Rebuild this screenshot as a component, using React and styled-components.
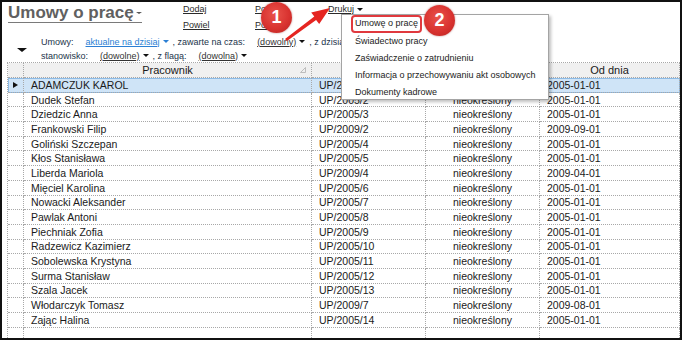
import styled, { createGlobalStyle } from "styled-components";

const GlobalStyle = createGlobalStyle`
  html, body {
    margin: 0;
    padding: 0;
    background: #ffffff;
  }
  body {
    font-family: "Liberation Sans", Arial, sans-serif;
    color: #1a1a1a;
  }
`;

/* ========== Layout ========== */
const Frame = styled.div`
  position: relative;
  width: 682px;
  height: 340px;
  box-sizing: border-box;
  border: 2px solid #111;
  overflow: hidden;
  background: #fff;
`;

const TopBar = styled.div`
  display: flex;
  height: 33px;
  padding-left: 6px;
`;

const TitleBox = styled.div`
  width: 175px;
`;

const Title = styled.h1`
  display: inline-flex;
  align-items: center;
  gap: 2px;
  margin: 1px 0 0;
  font-size: 17px;
  line-height: 19px;
  font-weight: bold;
  color: #606060;
  border-bottom: 1px solid #7a7a7a;
`;

const ActionCol = styled.div`
  display: flex;
  flex-direction: column;
  gap: 2px;
  width: ${({ $w }) => $w}px;
`;

const ActionLink = styled.span`
  display: inline-flex;
  align-items: center;
  gap: 3px;
  font-size: 9px;
  line-height: 14px;
  color: #2a2a2a;
  text-decoration: underline;
`;

const Caret = styled.span`
  display: inline-block;
  width: 0;
  height: 0;
  border-left: ${({ $s }) => $s}px solid transparent;
  border-right: ${({ $s }) => $s}px solid transparent;
  border-top: ${({ $s }) => Math.round($s * 0.8)}px solid ${({ $c }) => $c || "#111"};
`;

const FilterArea = styled.div`
  display: flex;
  align-items: center;
  height: 27px;
  padding-left: 15px;
`;

const BigCaretBox = styled.div`
  width: 24px;
  display: flex;
  padding-top: 3px;
`;

const FilterLines = styled.div`
  display: flex;
  flex-direction: column;
  font-size: 9px;
  line-height: 14px;
`;

const FilterLine = styled.div`
  display: flex;
  align-items: center;
  white-space: nowrap;
`;

const Label = styled.span`
  color: #22344a;
  margin-right: 12px;
`;

const Sep = styled.span`
  color: #22344a;
  margin: 0 12px 0 4px;
`;

const Pick = styled.span`
  display: inline-flex;
  align-items: center;
  gap: 3px;
  color: ${({ $blue }) => ($blue ? "#2b7fd4" : "#333")};
  text-decoration: underline;
`;

/* ========== Grid ========== */
const Grid = styled.div`
  margin-left: 5px;
  border-top: 1px dotted #a8a8a8;
  border-left: 1px dotted #a8a8a8;
`;

const Row = styled.div`
  display: grid;
  grid-template-columns: 16px 288px 114px 114px 1fr;
  height: ${({ $h }) => $h}px;
  box-sizing: border-box;
  background: ${({ $head, $sel }) =>
    $head ? "#f0f0f0" : $sel ? "#cfe4f7" : "#fff"};
  outline: ${({ $sel }) => ($sel ? "1px solid #8dbbe6" : "none")};
  outline-offset: -1px;
  font-size: ${({ $head }) => ($head ? "11px" : "10.5px")};
`;

const Cell = styled.div`
  position: relative;
  display: flex;
  align-items: center;
  justify-content: ${({ $center }) => ($center ? "center" : "flex-start")};
  padding: 0 7px;
  box-sizing: border-box;
  border-right: 1px dotted #a8a8a8;
  border-bottom: 1px dotted #a8a8a8;
  white-space: nowrap;
  overflow: hidden;
  color: #1a1a1a;
`;

const IndCell = styled(Cell)`
  padding: 0;
  justify-content: center;
`;

const Pointer = styled.span`
  width: 0;
  height: 0;
  border-top: 3.5px solid transparent;
  border-bottom: 3.5px solid transparent;
  border-left: 5px solid #111;
`;

const SortMark = styled.svg`
  position: absolute;
  right: 5px;
  top: 4px;
`;

/* ========== Overlays ========== */
const Menu = styled.div`
  position: absolute;
  left: 339px;
  top: 12px;
  width: 208px;
  height: 86px;
  box-sizing: border-box;
  padding-top: 1px;
  background: #fff;
  border: 1px solid #a4a4a4;
  box-shadow: 2px 2px 3px rgba(0, 0, 0, 0.25);
  font-size: 9px;
  color: #222;
`;

const MenuItem = styled.div`
  display: flex;
  align-items: center;
  height: 16.8px;
  padding-left: ${({ $marked }) => ($marked ? 9 : 13)}px;
`;

const MarkedText = styled.span`
  padding: 1px 2px 2px;
  border: 2px solid #e0393e;
  border-radius: 4px;
  line-height: 11px;
`;

const Badge = styled.div`
  position: absolute;
  left: ${({ $x }) => $x}px;
  top: ${({ $y }) => $y}px;
  width: 31px;
  height: 31px;
  border-radius: 50%;
  display: flex;
  align-items: center;
  justify-content: center;
  background: radial-gradient(circle at 45% 40%, #e9534b 0%, #d93330 55%, #b8221f 100%);
  box-shadow: 0 0 2px rgba(120, 0, 0, 0.5);
  color: #fff;
  font-weight: bold;
  font-size: 18px;
`;

const ArrowSvg = styled.svg`
  position: absolute;
  left: 0;
  top: 0;
  pointer-events: none;
`;

/* ========== Data ========== */
const rows = [
  ["ADAMCZUK KAROL", "UP/2005/1", "2005-01-01"],
  ["Dudek Stefan", "UP/2005/2", "2005-01-01"],
  ["Dziedzic Anna", "UP/2005/3", "2005-01-01"],
  ["Frankowski Filip", "UP/2009/2", "2009-09-01"],
  ["Goliński Szczepan", "UP/2005/4", "2005-01-01"],
  ["Kłos Stanisława", "UP/2005/5", "2005-01-01"],
  ["Liberda Mariola", "UP/2009/4", "2009-04-01"],
  ["Mięciel Karolina", "UP/2005/6", "2005-01-01"],
  ["Nowacki Aleksander", "UP/2005/7", "2005-01-01"],
  ["Pawlak Antoni", "UP/2005/8", "2005-01-01"],
  ["Piechniak Zofia", "UP/2005/9", "2005-01-01"],
  ["Radzewicz Kazimierz", "UP/2005/10", "2005-01-01"],
  ["Sobolewska Krystyna", "UP/2005/11", "2005-01-01"],
  ["Surma Stanisław", "UP/2005/12", "2005-01-01"],
  ["Szala Jacek", "UP/2005/13", "2005-01-01"],
  ["Włodarczyk Tomasz", "UP/2009/7", "2009-08-01"],
  ["Zając Halina", "UP/2005/14", "2005-01-01"],
];

const menuItems = [
  "Umowę o pracę",
  "Świadectwo pracy",
  "Zaświadczenie o zatrudnieniu",
  "Informacja o przechowywaniu akt osobowych",
  "Dokumenty kadrowe",
];

export default function App() {
  return (
    <Frame>
      <GlobalStyle />
      <TopBar>
        <TitleBox>
          <Title>
            Umowy o pracę
            <Caret $s={3} $c="#555" />
          </Title>
        </TitleBox>
        <ActionCol $w={72}>
          <ActionLink>Dodaj</ActionLink>
          <ActionLink>Powiel</ActionLink>
        </ActionCol>
        <ActionCol $w={73}>
          <ActionLink>Popraw</ActionLink>
          <ActionLink>Pokaż</ActionLink>
        </ActionCol>
        <ActionCol $w={80}>
          <ActionLink>
            Drukuj
            <Caret $s={3.5} />
          </ActionLink>
        </ActionCol>
      </TopBar>

      <FilterArea>
        <BigCaretBox>
          <Caret $s={5} />
        </BigCaretBox>
        <FilterLines>
          <FilterLine>
            <Label>Umowy:</Label>
            <Pick $blue>
              aktualne na dzisiaj
              <Caret $s={3.5} $c="#2b7fd4" />
            </Pick>
            <Sep>, zawarte na czas:</Sep>
            <Pick>
              (dowolny)
              <Caret $s={3.5} />
            </Pick>
            <Sep>, z dzisiaj</Sep>
          </FilterLine>
          <FilterLine>
            <Label>stanowisko:</Label>
            <Pick>
              (dowolne)
              <Caret $s={3.5} />
            </Pick>
            <Sep>, z flagą:</Sep>
            <Pick>
              (dowolna)
              <Caret $s={3.5} />
            </Pick>
          </FilterLine>
        </FilterLines>
      </FilterArea>

      <Grid>
        <Row $head $h={15}>
          <IndCell />
          <Cell $center>
            Pracownik
            <SortMark width="6" height="6" viewBox="0 0 6 6">
              <path d="M5.5 0.5 L5.5 5.5 L0.5 5.5 Z" fill="none" stroke="#b0b0b0" strokeWidth="0.8" />
            </SortMark>
          </Cell>
          <Cell />
          <Cell />
          <Cell $center>Od dnia</Cell>
        </Row>
        {rows.map(([name, num, date], i) => (
          <Row key={num} $sel={i === 0} $h={14.7}>
            <IndCell>{i === 0 && <Pointer />}</IndCell>
            <Cell>{name}</Cell>
            <Cell>{num}</Cell>
            <Cell $center>nieokreślony</Cell>
            <Cell>{date}</Cell>
          </Row>
        ))}
        <Row $h={14.7}>
          <IndCell />
          <Cell />
          <Cell />
          <Cell />
          <Cell />
        </Row>
      </Grid>

      <Menu>
        {menuItems.map((item, i) => (
          <MenuItem key={item} $marked={i === 0}>
            {i === 0 ? <MarkedText>{item}</MarkedText> : item}
          </MenuItem>
        ))}
      </Menu>

      <Badge $x={259} $y={0}>1</Badge>
      <Badge $x={422} $y={3}>2</Badge>

      <ArrowSvg width="340" height="60" viewBox="2 2 340 60">
        <polygon
          points="285,39 314.3,16.4 311.2,12.6 330,8 319.2,24 316.1,20.1 287,41"
          fill="#e52521"
        />
      </ArrowSvg>
    </Frame>
  );
}
